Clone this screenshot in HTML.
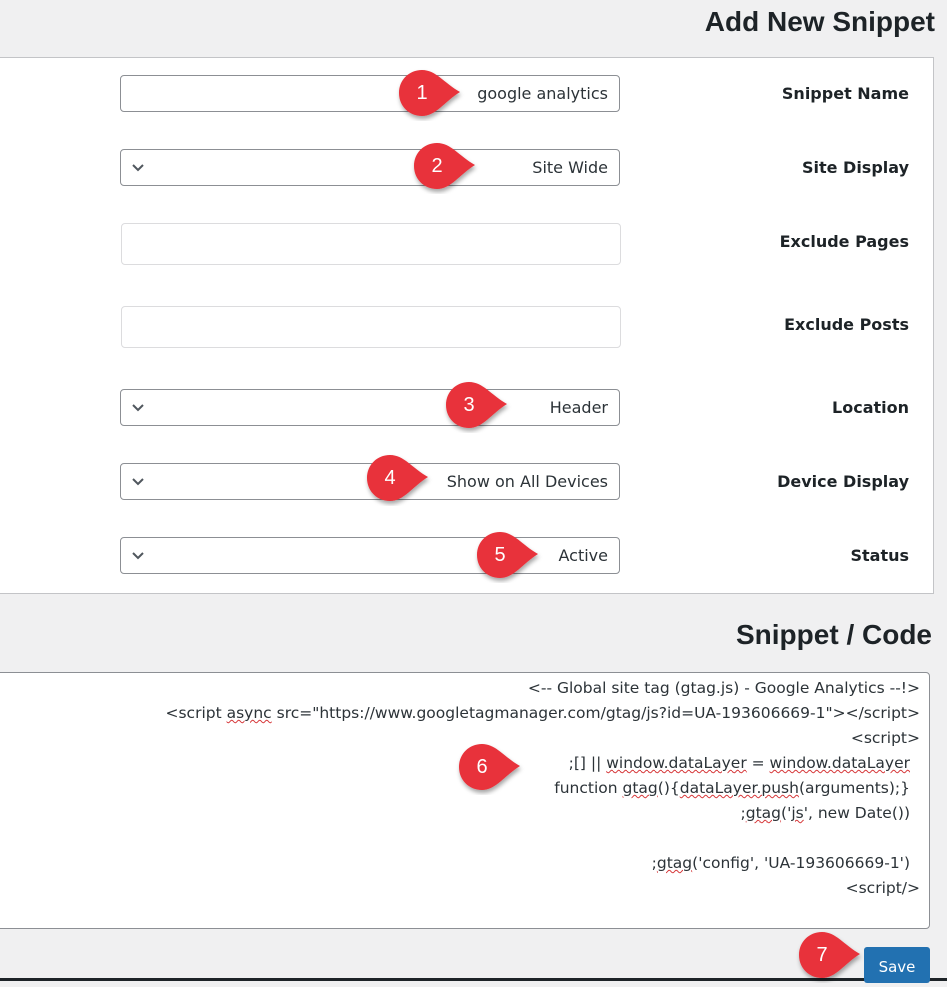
<!DOCTYPE html>
<html><head><meta charset="utf-8"><style>
*{box-sizing:border-box;margin:0;padding:0}
body{width:947px;height:981px;background:#f0f0f1;position:relative;overflow:hidden;font-family:"DejaVu Sans","Liberation Sans",sans-serif;color:#1d2327}
.abs{position:absolute}
h1{position:absolute;right:12px;font-size:28px;font-weight:bold;font-family:"Liberation Sans",sans-serif}
.panel{position:absolute;left:-2px;top:57px;width:936px;height:537px;background:#fff;border:1px solid #c3c4c7}
.inp{position:absolute;left:120px;width:500px;height:37px;border:1px solid #8c8f94;border-radius:4px;background:#fff;font-size:16px;text-align:right;padding-right:11px;line-height:35px;color:#2c3338}
.inp.l{border-color:#dcdcde;left:121px;height:42px}
.chev{position:absolute;left:10px;top:11px}
.lab{position:absolute;right:38px;font-size:16px;font-weight:bold;font-family:"DejaVu Sans",sans-serif}
.ta{position:absolute;left:-4px;top:672px;width:934px;height:257px;border:1px solid #8c8f94;border-radius:4px;background:#fff}
.code{position:absolute;font-size:15.5px;white-space:nowrap;text-align:right;color:#2c3338}
u{text-decoration:underline wavy #d63638;text-decoration-thickness:1px}
.save{position:absolute;left:864px;top:947px;width:66px;height:36px;background:#2271b1;color:#fff;font-size:15px;text-align:center;line-height:40px;border-radius:3px}
.mk{position:absolute;width:70px;height:54px}
.mk span{position:absolute;left:0;top:0;width:48px;height:48px;line-height:48px;text-align:center;color:#fff;font-size:20px;font-family:"Liberation Sans",sans-serif}
</style></head><body>
<h1 style="top:6px">Add New Snippet</h1>
<div class="panel"></div>
<div class="inp" style="top:75px">google analytics</div>
<div class="inp" style="top:149px"><svg class="chev" width="14" height="14"><path d="M2 4l5 5 5-5" stroke="#50575e" stroke-width="2" fill="none"/></svg>Site Wide</div>
<div class="inp l" style="top:223px"></div>
<div class="inp l" style="top:306px"></div>
<div class="inp" style="top:389px"><svg class="chev" width="14" height="14"><path d="M2 4l5 5 5-5" stroke="#50575e" stroke-width="2" fill="none"/></svg>Header</div>
<div class="inp" style="top:463px"><svg class="chev" width="14" height="14"><path d="M2 4l5 5 5-5" stroke="#50575e" stroke-width="2" fill="none"/></svg>Show on All Devices</div>
<div class="inp" style="top:537px"><svg class="chev" width="14" height="14"><path d="M2 4l5 5 5-5" stroke="#50575e" stroke-width="2" fill="none"/></svg>Active</div>
<div class="lab" style="top:84px">Snippet Name</div>
<div class="lab" style="top:158px">Site Display</div>
<div class="lab" style="top:232px">Exclude Pages</div>
<div class="lab" style="top:315px">Exclude Posts</div>
<div class="lab" style="top:398px">Location</div>
<div class="lab" style="top:472px">Device Display</div>
<div class="lab" style="top:546px">Status</div>
<h1 style="top:619px;right:15px">Snippet / Code</h1>
<div class="ta"></div>
<div class="code" style="right:27px;top:679px">&lt;-- Global site tag (gtag.js) - Google Analytics --!&gt;</div>
<div class="code" style="right:27px;top:704px">&lt;script <u>async</u> src="https://www.googletagmanager.com/gtag/js?id=UA-193606669-1"&gt;&lt;/script&gt;</div>
<div class="code" style="right:27px;top:729px">&lt;script&gt;</div>
<div class="code" style="right:37px;top:754px">;[] || <u>window.dataLayer</u> = <u>window.dataLayer</u></div>
<div class="code" style="right:37px;top:779px">function <u>gtag</u>(){<u>dataLayer.push</u>(arguments);}</div>
<div class="code" style="right:37px;top:804px">;<u>gtag</u>('<u>js</u>', new Date())</div>
<div class="code" style="right:37px;top:854px">;<u>gtag</u>('config', 'UA-193606669-1')</div>
<div class="code" style="right:27px;top:879px">&lt;script/&gt;</div>
<div class="abs" style="left:0;top:978px;width:947px;height:3px;background:#1d2327"></div>
<div class="save">Save</div>
<svg width="0" height="0" style="position:absolute"><defs><filter id="sh"><feDropShadow dx="1" dy="3" stdDeviation="2" flood-opacity="0.35"/></filter></defs></svg>
<div id="m"></div>
<script>
var pts=[[422,93,1],[437,166,2],[469,405,3],[390,478,4],[500,555,5],[482,767,6],[822,955,7]];
var h='';pts.forEach(function(p){
h+='<div class="mk" style="left:'+(p[0]-24)+'px;top:'+(p[1]-24)+'px"><svg width="70" height="56" style="position:absolute;left:0;top:0;overflow:visible"><path d="M24 1C38 1 46 14 62 23C46 33 38 47 24 47C11 47 1 37 1 24C1 11 11 1 24 1Z" fill="#e8323a" filter="url(#sh)"/></svg><span>'+p[2]+'</span></div>';});
document.getElementById('m').innerHTML=h;
</script>
</body></html>
